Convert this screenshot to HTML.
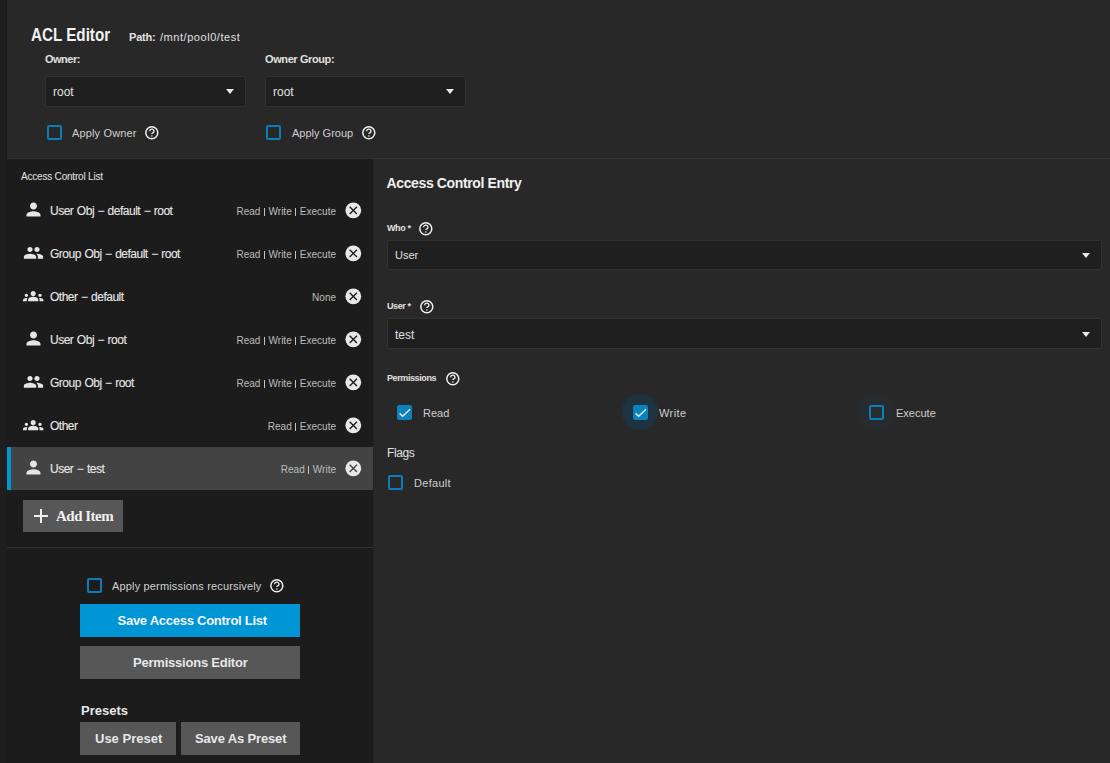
<!DOCTYPE html>
<html><head><meta charset="utf-8">
<style>
*{margin:0;padding:0;box-sizing:border-box}
html,body{width:1110px;height:763px;overflow:hidden;background:#1e1e1e;font-family:"Liberation Sans",sans-serif;color:#e0e0e0}
.a{position:absolute}
.t{position:absolute;white-space:nowrap;line-height:1}
.sel{position:absolute;background:#1f1f1f;border:1px solid #323232;border-radius:2px}
.arr{position:absolute;width:0;height:0;border-left:4.8px solid transparent;border-right:4.8px solid transparent;border-top:5.1px solid #e8e8e8}
.cb{position:absolute;width:15px;height:15px;border:2px solid #0b7db8;border-radius:2px}
.cbc{position:absolute;width:15px;height:15px;background:#0b81bd;border-radius:2px}
.btn{position:absolute;background:#575757}
svg{position:absolute;display:block}
.item{position:absolute;left:7px;width:366px;height:43px}
.perm{position:absolute;right:37px;font-size:10px;color:#bdbdbd;white-space:nowrap;line-height:1}
</style></head><body>
<div class="a" style="left:7px;top:0;width:1103px;height:158px;background:#282828"></div>
<div class="a" style="left:7px;top:158px;width:1103px;height:1px;background:#333"></div>
<div class="a" style="left:7px;top:159px;width:366px;height:604px;background:#1c1c1c"></div>
<div class="a" style="left:373px;top:159px;width:737px;height:604px;background:#282828"></div>
<div class="a" style="left:373px;top:159px;width:1px;height:604px;background:#242424"></div>
<div class="a" style="left:6px;top:0;width:1px;height:763px;background:#1b1b1b"></div>
<div class="t" id="h1" style="left:31px;top:26px;font-size:18px;font-weight:bold;color:#f0f0f0;letter-spacing:0px;transform:scaleX(0.845);transform-origin:0 0">ACL Editor</div>
<div class="t" id="path1" style="left:129px;top:32px;font-size:11px;font-weight:bold;color:#e0e0e0;letter-spacing:-0.2px;">Path:</div>
<div class="t" id="path2" style="left:160px;top:32px;font-size:11px;font-weight:normal;color:#e0e0e0;letter-spacing:0.55px;">/mnt/pool0/test</div>
<div class="t" id="own" style="left:45px;top:54px;font-size:11px;font-weight:bold;color:#e0e0e0;letter-spacing:-0.5px;">Owner:</div>
<div class="t" id="owng" style="left:265px;top:54px;font-size:11px;font-weight:bold;color:#e0e0e0;letter-spacing:-0.4px;">Owner Group:</div>
<div class="sel" style="left:45px;top:76px;width:201px;height:31px"></div>
<div class="t" id="root1" style="left:53px;top:86px;font-size:12px;font-weight:normal;color:#e0e0e0;letter-spacing:0px;">root</div>
<div class="arr" style="left:226px;top:89.2px"></div>
<div class="sel" style="left:264.6px;top:76px;width:201px;height:31px"></div>
<div class="t" id="root2" style="left:273px;top:86px;font-size:12px;font-weight:normal;color:#e0e0e0;letter-spacing:0px;">root</div>
<div class="arr" style="left:445.7px;top:89.2px"></div>
<div class="cb" style="left:47px;top:125px"></div>
<div class="t" id="apo" style="left:72px;top:128px;font-size:11px;font-weight:normal;color:#cfcfcf;letter-spacing:0.15px;">Apply Owner</div>
<svg style="left:144px;top:124.7px" width="15.6" height="15.6" viewBox="0 0 16 16"><circle cx="8" cy="8" r="6.15" fill="none" stroke="#f0f0f0" stroke-width="1.55"/><path d="M5.8 6.4A2.2 2.2 0 1 1 9.85 7.6Q8.05 8.35 8.05 9.35" fill="none" stroke="#f0f0f0" stroke-width="1.35"/><circle cx="8.05" cy="11.35" r="0.78" fill="#f0f0f0"/></svg>
<div class="cb" style="left:266px;top:125px"></div>
<div class="t" id="apg" style="left:292px;top:128px;font-size:11px;font-weight:normal;color:#cfcfcf;letter-spacing:0px;">Apply Group</div>
<svg style="left:360.9px;top:124.5px" width="15.6" height="15.6" viewBox="0 0 16 16"><circle cx="8" cy="8" r="6.15" fill="none" stroke="#f0f0f0" stroke-width="1.55"/><path d="M5.8 6.4A2.2 2.2 0 1 1 9.85 7.6Q8.05 8.35 8.05 9.35" fill="none" stroke="#f0f0f0" stroke-width="1.35"/><circle cx="8.05" cy="11.35" r="0.78" fill="#f0f0f0"/></svg>
<div class="t" id="acl" style="left:21px;top:172px;font-size:10px;font-weight:normal;color:#e4e4e4;letter-spacing:-0.2px;">Access Control List</div>
<div class="item" style="top:189px;">
<svg style="left:16px;top:10.2px" width="21" height="21" viewBox="0 0 24 24" preserveAspectRatio="none"><path fill="#e6e6e6" d="M12 12c2.21 0 4-1.79 4-4s-1.79-4-4-4-4 1.79-4 4 1.79 4 4 4zm0 2c-2.67 0-8 1.34-8 4v2h16v-2c0-2.66-5.33-4-8-4z"/></svg>
<div class="t" id="it0" style="left:43px;top:16px;font-size:12px;font-weight:normal;color:#e8e8e8;letter-spacing:-0.5px;word-spacing:0.7px;-webkit-text-stroke:0.1px #e8e8e8">User Obj − default − root</div>
<div class="perm" id="pm0" style="top:18px">Read <span style="display:inline-block;width:1px;height:8px;background:#c4c4c4;vertical-align:-1px;margin:0 0.8px"></span> Write <span style="display:inline-block;width:1px;height:8px;background:#c4c4c4;vertical-align:-1px;margin:0 0.8px"></span> Execute</div>
<svg style="left:336px;top:11px" width="20" height="20" viewBox="0 0 20 20"><circle cx="10.3" cy="10.35" r="7.9" fill="#e8e8e8"/><path d="M6.65 6.7L13.95 14M13.95 6.7L6.65 14" stroke="#1c1c1c" stroke-width="1.35"/></svg>
</div>
<div class="item" style="top:232px;">
<svg style="left:16px;top:11px" width="21" height="19.8" viewBox="0 0 24 24" preserveAspectRatio="none"><path fill="#e6e6e6" d="M16 11c1.66 0 2.99-1.34 2.99-3S17.66 5 16 5c-1.66 0-3 1.34-3 3s1.34 3 3 3zm-8 0c1.66 0 2.99-1.34 2.99-3S9.66 5 8 5C6.34 5 5 6.34 5 8s1.34 3 3 3zm0 2c-2.33 0-7 1.17-7 3.5V19h14v-2.5c0-2.33-4.67-3.5-7-3.5zm8 0c-.29 0-.62.02-.97.05 1.16.84 1.97 1.97 1.97 3.45V19h6v-2.5c0-2.33-4.67-3.5-7-3.5z"/></svg>
<div class="t" id="it1" style="left:43px;top:16px;font-size:12px;font-weight:normal;color:#e8e8e8;letter-spacing:-0.5px;word-spacing:0.7px;-webkit-text-stroke:0.1px #e8e8e8">Group Obj − default − root</div>
<div class="perm" id="pm1" style="top:18px">Read <span style="display:inline-block;width:1px;height:8px;background:#c4c4c4;vertical-align:-1px;margin:0 0.8px"></span> Write <span style="display:inline-block;width:1px;height:8px;background:#c4c4c4;vertical-align:-1px;margin:0 0.8px"></span> Execute</div>
<svg style="left:336px;top:11px" width="20" height="20" viewBox="0 0 20 20"><circle cx="10.3" cy="10.35" r="7.9" fill="#e8e8e8"/><path d="M6.65 6.7L13.95 14M13.95 6.7L6.65 14" stroke="#1c1c1c" stroke-width="1.35"/></svg>
</div>
<div class="item" style="top:275px;">
<svg style="left:16.3px;top:10.7px" width="20.4" height="20.4" viewBox="0 0 24 24" preserveAspectRatio="none"><path fill="#e6e6e6" d="M12 12.75c1.63 0 3.07.39 4.24.9 1.08.48 1.76 1.56 1.76 2.73V18H6v-1.61c0-1.18.68-2.26 1.76-2.73 1.17-.52 2.61-.91 4.24-.91zM4 13c1.1 0 2-.9 2-2s-.9-2-2-2-2 .9-2 2 .9 2 2 2zm1.13 1.1c-.37-.06-.74-.1-1.13-.1-.99 0-1.93.21-2.78.58C.48 14.9 0 15.62 0 16.43V18h4.5v-1.61c0-.83.23-1.61.63-2.29zM20 13c1.1 0 2-.9 2-2s-.9-2-2-2-2 .9-2 2 .9 2 2 2zm4 3.43c0-.81-.48-1.53-1.22-1.85-.85-.37-1.79-.58-2.78-.58-.39 0-.76.04-1.13.1.4.68.63 1.46.63 2.29V18H24v-1.57zM12 6c1.66 0 3 1.34 3 3s-1.34 3-3 3-3-1.34-3-3 1.34-3 3-3z"/></svg>
<div class="t" id="it2" style="left:43px;top:16px;font-size:12px;font-weight:normal;color:#e8e8e8;letter-spacing:-0.5px;word-spacing:0.7px;-webkit-text-stroke:0.1px #e8e8e8">Other − default</div>
<div class="perm" id="pm2" style="top:18px">None</div>
<svg style="left:336px;top:11px" width="20" height="20" viewBox="0 0 20 20"><circle cx="10.3" cy="10.35" r="7.9" fill="#e8e8e8"/><path d="M6.65 6.7L13.95 14M13.95 6.7L6.65 14" stroke="#1c1c1c" stroke-width="1.35"/></svg>
</div>
<div class="item" style="top:318px;">
<svg style="left:16px;top:10.2px" width="21" height="21" viewBox="0 0 24 24" preserveAspectRatio="none"><path fill="#e6e6e6" d="M12 12c2.21 0 4-1.79 4-4s-1.79-4-4-4-4 1.79-4 4 1.79 4 4 4zm0 2c-2.67 0-8 1.34-8 4v2h16v-2c0-2.66-5.33-4-8-4z"/></svg>
<div class="t" id="it3" style="left:43px;top:16px;font-size:12px;font-weight:normal;color:#e8e8e8;letter-spacing:-0.5px;word-spacing:0.7px;-webkit-text-stroke:0.1px #e8e8e8">User Obj − root</div>
<div class="perm" id="pm3" style="top:18px">Read <span style="display:inline-block;width:1px;height:8px;background:#c4c4c4;vertical-align:-1px;margin:0 0.8px"></span> Write <span style="display:inline-block;width:1px;height:8px;background:#c4c4c4;vertical-align:-1px;margin:0 0.8px"></span> Execute</div>
<svg style="left:336px;top:11px" width="20" height="20" viewBox="0 0 20 20"><circle cx="10.3" cy="10.35" r="7.9" fill="#e8e8e8"/><path d="M6.65 6.7L13.95 14M13.95 6.7L6.65 14" stroke="#1c1c1c" stroke-width="1.35"/></svg>
</div>
<div class="item" style="top:361px;">
<svg style="left:16px;top:11px" width="21" height="19.8" viewBox="0 0 24 24" preserveAspectRatio="none"><path fill="#e6e6e6" d="M16 11c1.66 0 2.99-1.34 2.99-3S17.66 5 16 5c-1.66 0-3 1.34-3 3s1.34 3 3 3zm-8 0c1.66 0 2.99-1.34 2.99-3S9.66 5 8 5C6.34 5 5 6.34 5 8s1.34 3 3 3zm0 2c-2.33 0-7 1.17-7 3.5V19h14v-2.5c0-2.33-4.67-3.5-7-3.5zm8 0c-.29 0-.62.02-.97.05 1.16.84 1.97 1.97 1.97 3.45V19h6v-2.5c0-2.33-4.67-3.5-7-3.5z"/></svg>
<div class="t" id="it4" style="left:43px;top:16px;font-size:12px;font-weight:normal;color:#e8e8e8;letter-spacing:-0.5px;word-spacing:0.7px;-webkit-text-stroke:0.1px #e8e8e8">Group Obj − root</div>
<div class="perm" id="pm4" style="top:18px">Read <span style="display:inline-block;width:1px;height:8px;background:#c4c4c4;vertical-align:-1px;margin:0 0.8px"></span> Write <span style="display:inline-block;width:1px;height:8px;background:#c4c4c4;vertical-align:-1px;margin:0 0.8px"></span> Execute</div>
<svg style="left:336px;top:11px" width="20" height="20" viewBox="0 0 20 20"><circle cx="10.3" cy="10.35" r="7.9" fill="#e8e8e8"/><path d="M6.65 6.7L13.95 14M13.95 6.7L6.65 14" stroke="#1c1c1c" stroke-width="1.35"/></svg>
</div>
<div class="item" style="top:404px;">
<svg style="left:16.3px;top:10.7px" width="20.4" height="20.4" viewBox="0 0 24 24" preserveAspectRatio="none"><path fill="#e6e6e6" d="M12 12.75c1.63 0 3.07.39 4.24.9 1.08.48 1.76 1.56 1.76 2.73V18H6v-1.61c0-1.18.68-2.26 1.76-2.73 1.17-.52 2.61-.91 4.24-.91zM4 13c1.1 0 2-.9 2-2s-.9-2-2-2-2 .9-2 2 .9 2 2 2zm1.13 1.1c-.37-.06-.74-.1-1.13-.1-.99 0-1.93.21-2.78.58C.48 14.9 0 15.62 0 16.43V18h4.5v-1.61c0-.83.23-1.61.63-2.29zM20 13c1.1 0 2-.9 2-2s-.9-2-2-2-2 .9-2 2 .9 2 2 2zm4 3.43c0-.81-.48-1.53-1.22-1.85-.85-.37-1.79-.58-2.78-.58-.39 0-.76.04-1.13.1.4.68.63 1.46.63 2.29V18H24v-1.57zM12 6c1.66 0 3 1.34 3 3s-1.34 3-3 3-3-1.34-3-3 1.34-3 3-3z"/></svg>
<div class="t" id="it5" style="left:43px;top:16px;font-size:12px;font-weight:normal;color:#e8e8e8;letter-spacing:-0.5px;word-spacing:0.7px;-webkit-text-stroke:0.1px #e8e8e8">Other</div>
<div class="perm" id="pm5" style="top:18px">Read <span style="display:inline-block;width:1px;height:8px;background:#c4c4c4;vertical-align:-1px;margin:0 0.8px"></span> Execute</div>
<svg style="left:336px;top:11px" width="20" height="20" viewBox="0 0 20 20"><circle cx="10.3" cy="10.35" r="7.9" fill="#e8e8e8"/><path d="M6.65 6.7L13.95 14M13.95 6.7L6.65 14" stroke="#1c1c1c" stroke-width="1.35"/></svg>
</div>
<div class="item" style="top:447px;background:#434343">
<div class="a" style="left:0;top:0;width:4px;height:43px;background:#0095d5"></div>
<svg style="left:16px;top:10.2px" width="21" height="21" viewBox="0 0 24 24" preserveAspectRatio="none"><path fill="#e6e6e6" d="M12 12c2.21 0 4-1.79 4-4s-1.79-4-4-4-4 1.79-4 4 1.79 4 4 4zm0 2c-2.67 0-8 1.34-8 4v2h16v-2c0-2.66-5.33-4-8-4z"/></svg>
<div class="t" id="it6" style="left:43px;top:16px;font-size:12px;font-weight:normal;color:#e8e8e8;letter-spacing:-0.5px;word-spacing:0.7px;-webkit-text-stroke:0.1px #e8e8e8">User − test</div>
<div class="perm" id="pm6" style="top:18px">Read <span style="display:inline-block;width:1px;height:8px;background:#c4c4c4;vertical-align:-1px;margin:0 0.8px"></span> Write</div>
<svg style="left:336px;top:11px" width="20" height="20" viewBox="0 0 20 20"><circle cx="10.3" cy="10.35" r="7.9" fill="#e8e8e8"/><path d="M6.65 6.7L13.95 14M13.95 6.7L6.65 14" stroke="#434343" stroke-width="1.35"/></svg>
</div>
<div class="btn" style="left:23px;top:500px;width:100px;height:32px"></div>
<div class="a" style="left:34px;top:515px;width:14px;height:2px;background:#f0f0f0"></div><div class="a" style="left:40px;top:509px;width:2px;height:14px;background:#f0f0f0"></div>
<div class="t" id="addt" style="left:56px;top:509px;font-size:15px;font-weight:bold;color:#f0f0f0;letter-spacing:-0.5px;font-family:'Liberation Serif',serif">Add Item</div>
<div class="a" style="left:7px;top:547px;width:366px;height:1px;background:#333"></div>
<div class="cb" style="left:87px;top:578px"></div>
<div class="t" id="apr" style="left:112px;top:581px;font-size:11px;font-weight:normal;color:#cfcfcf;letter-spacing:0.16px;">Apply permissions recursively</div>
<svg style="left:269.3px;top:577.7px" width="15.6" height="15.6" viewBox="0 0 16 16"><circle cx="8" cy="8" r="6.15" fill="none" stroke="#f0f0f0" stroke-width="1.55"/><path d="M5.8 6.4A2.2 2.2 0 1 1 9.85 7.6Q8.05 8.35 8.05 9.35" fill="none" stroke="#f0f0f0" stroke-width="1.35"/><circle cx="8.05" cy="11.35" r="0.78" fill="#f0f0f0"/></svg>
<div class="btn" style="left:80px;top:604px;width:220px;height:33px;background:#0095d5"></div>
<div class="t" id="savet" style="left:117.5px;top:613.5px;font-size:13px;font-weight:bold;color:#f4f4f4;letter-spacing:-0.26px;">Save Access Control List</div>
<div class="btn" style="left:80px;top:646px;width:220px;height:33px"></div>
<div class="t" id="pedt" style="left:133px;top:656px;font-size:13px;font-weight:bold;color:#e8e8e8;letter-spacing:-0.22px;">Permissions Editor</div>
<div class="t" id="presets" style="left:81px;top:704px;font-size:13px;font-weight:bold;color:#e8e8e8;letter-spacing:0px;">Presets</div>
<div class="btn" style="left:80px;top:722px;width:96px;height:33px"></div>
<div class="t" id="usep" style="left:95px;top:732px;font-size:13px;font-weight:bold;color:#e8e8e8;letter-spacing:0px;">Use Preset</div>
<div class="btn" style="left:181px;top:722px;width:119px;height:33px"></div>
<div class="t" id="savep" style="left:195px;top:732px;font-size:13px;font-weight:bold;color:#e8e8e8;letter-spacing:-0.15px;">Save As Preset</div>
<div class="t" id="ace" style="left:386.5px;top:176.3px;font-size:14px;font-weight:bold;color:#f0f0f0;letter-spacing:-0.37px;">Access Control Entry</div>
<div class="t" id="who" style="left:387px;top:224px;font-size:9px;font-weight:bold;color:#e0e0e0;letter-spacing:-0.4px;">Who *</div>
<svg style="left:418.4px;top:220.8px" width="15.6" height="15.6" viewBox="0 0 16 16"><circle cx="8" cy="8" r="6.15" fill="none" stroke="#f0f0f0" stroke-width="1.55"/><path d="M5.8 6.4A2.2 2.2 0 1 1 9.85 7.6Q8.05 8.35 8.05 9.35" fill="none" stroke="#f0f0f0" stroke-width="1.35"/><circle cx="8.05" cy="11.35" r="0.78" fill="#f0f0f0"/></svg>
<div class="sel" style="left:387px;top:240px;width:715px;height:30px"></div>
<div class="t" id="usr" style="left:395px;top:250px;font-size:11px;font-weight:normal;color:#e0e0e0;letter-spacing:0px;">User</div>
<div class="arr" style="left:1081.5px;top:253px"></div>
<div class="t" id="usr2" style="left:387px;top:302px;font-size:9px;font-weight:bold;color:#e0e0e0;letter-spacing:-0.4px;">User *</div>
<svg style="left:418.5px;top:298.7px" width="15.6" height="15.6" viewBox="0 0 16 16"><circle cx="8" cy="8" r="6.15" fill="none" stroke="#f0f0f0" stroke-width="1.55"/><path d="M5.8 6.4A2.2 2.2 0 1 1 9.85 7.6Q8.05 8.35 8.05 9.35" fill="none" stroke="#f0f0f0" stroke-width="1.35"/><circle cx="8.05" cy="11.35" r="0.78" fill="#f0f0f0"/></svg>
<div class="sel" style="left:387px;top:318px;width:715px;height:31px"></div>
<div class="t" id="tst" style="left:395px;top:329px;font-size:12px;font-weight:normal;color:#e0e0e0;letter-spacing:0px;">test</div>
<div class="arr" style="left:1081.5px;top:332px"></div>
<div class="t" id="permsl" style="left:387px;top:374px;font-size:9px;font-weight:bold;color:#e0e0e0;letter-spacing:-0.4px;">Permissions</div>
<svg style="left:444.5px;top:370.8px" width="15.6" height="15.6" viewBox="0 0 16 16"><circle cx="8" cy="8" r="6.15" fill="none" stroke="#f0f0f0" stroke-width="1.55"/><path d="M5.8 6.4A2.2 2.2 0 1 1 9.85 7.6Q8.05 8.35 8.05 9.35" fill="none" stroke="#f0f0f0" stroke-width="1.35"/><circle cx="8.05" cy="11.35" r="0.78" fill="#f0f0f0"/></svg>
<div class="a" style="left:622px;top:394px;width:36px;height:36px;border-radius:50%;background:#1d3440"></div>
<div class="a" style="left:858px;top:394px;width:36px;height:36px;border-radius:50%;background:#272b2e"></div>
<div class="cbc" style="left:397px;top:405px"><svg style="left:0;top:0" width="15" height="15" viewBox="0 0 15 15"><path d="M2.6 8.4L5.7 11.3 13 4.2" fill="none" stroke="#e8e8e8" stroke-width="1.5"/></svg></div>
<div class="t" id="rd" style="left:423px;top:408px;font-size:11px;font-weight:normal;color:#cfcfcf;letter-spacing:0px;">Read</div>
<div class="cbc" style="left:633px;top:405px"><svg style="left:0;top:0" width="15" height="15" viewBox="0 0 15 15"><path d="M2.6 8.4L5.7 11.3 13 4.2" fill="none" stroke="#e8e8e8" stroke-width="1.5"/></svg></div>
<div class="t" id="wr" style="left:659px;top:408px;font-size:11px;font-weight:normal;color:#cfcfcf;letter-spacing:0.4px;">Write</div>
<div class="cb" style="left:869px;top:405px"></div>
<div class="t" id="ex" style="left:896px;top:408px;font-size:11px;font-weight:normal;color:#cfcfcf;letter-spacing:0px;">Execute</div>
<div class="t" id="flg" style="left:387px;top:447px;font-size:12px;font-weight:normal;color:#e0e0e0;letter-spacing:-0.4px;">Flags</div>
<div class="cb" style="left:388px;top:475px"></div>
<div class="t" id="dft" style="left:414px;top:478px;font-size:11px;font-weight:normal;color:#cfcfcf;letter-spacing:0.3px;">Default</div>
</body></html>
